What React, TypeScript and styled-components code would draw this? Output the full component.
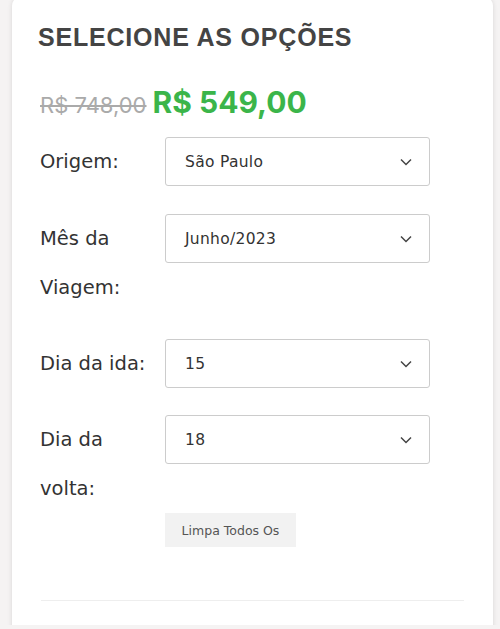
import React from "react";
import styled, { createGlobalStyle } from "styled-components";

const Global = createGlobalStyle`
  html, body { margin: 0; padding: 0; background: #f5f3f3; }
  body { font-family: "DejaVu Sans", "Liberation Sans", sans-serif; overflow: hidden; }
`;

const Page = styled.div`
  height: 629px;
  padding: 0 7px 0 12px;
`;

const Card = styled.div`
  margin-top: -4px;
  background: #fff;
  border-radius: 10px;
  box-shadow: 0 0 5px rgba(0, 0, 0, 0.12);
  padding: 26px 29px 40px 28px;
  min-height: 660px;
  box-sizing: border-box;
`;

const Title = styled.h2`
  margin: 0 0 0 -2px;
  font-family: "Liberation Sans", Arial, sans-serif;
  font-weight: 700;
  font-size: 25px;
  line-height: 30px;
  letter-spacing: 0.8px;
  color: #444;
`;

const PriceRow = styled.div`
  display: flex;
  align-items: baseline;
  gap: 6px;
  margin-top: 32px;
`;

const OldPrice = styled.span`
  font-family: "Inter", sans-serif;
  font-size: 22px;
  color: #aaa;
  text-decoration: line-through;
`;

const NewPrice = styled.span`
  font-family: "Inter", sans-serif;
  font-weight: 700;
  font-size: 30px;
  color: #3bb54a;
`;

const Form = styled.div`
  margin-top: 17px;
  display: grid;
  grid-template-columns: 125px 265px;
  grid-template-rows: auto;
  row-gap: 27px;
  & > :nth-child(3), & > :nth-child(4) {
    margin-top: 1px;
  }
`;

const Label = styled.div`
  font-family: "DejaVu Sans", sans-serif;
  font-size: 19.5px;
  line-height: 49px;
  color: #333;
  padding-right: 8px;
`;

const SelectBox = styled.div`
  height: 49px;
  box-sizing: border-box;
  border: 1px solid #ccc;
  border-radius: 3px;
  display: flex;
  align-items: center;
  justify-content: space-between;
  padding: 0 17px 0 19px;
  font-family: "DejaVu Sans", sans-serif;
  font-size: 15.5px;
  letter-spacing: 0.3px;
  color: #333;
`;

const Actions = styled.div`
  margin-left: 125px;
`;

const ClearButton = styled.button`
  border: 0;
  background: #f2f2f2;
  height: 34px;
  width: 131px;
  font-family: "DejaVu Sans", sans-serif;
  font-size: 12.5px;
  color: #555;
  padding: 0;
`;

const Divider = styled.hr`
  border: 0;
  border-top: 1px solid #eee;
  margin: 53px 0 0 1px;
`;

const Chevron = () => (
  <svg width="12" height="8" viewBox="0 0 12 8" fill="none">
    <path d="M1 1.5 L6 6.5 L11 1.5" stroke="#444" strokeWidth="1.5" />
  </svg>
);

const Field = ({ label, value }: { label: string; value: string }) => (
  <>
    <Label>{label}</Label>
    <SelectBox>
      <span>{value}</span>
      <Chevron />
    </SelectBox>
  </>
);

export default function App() {
  return (
    <Page>
      <Global />
      <Card>
        <Title>SELECIONE AS OPÇÕES</Title>
        <PriceRow>
          <OldPrice>R$ 748,00</OldPrice>
          <NewPrice>R$ 549,00</NewPrice>
        </PriceRow>
        <Form>
          <Field label="Origem:" value="São Paulo" />
          <Field label="Mês da Viagem:" value="Junho/2023" />
          <Field label="Dia da ida:" value="15" />
          <Field label="Dia da volta:" value="18" />
        </Form>
        <Actions>
          <ClearButton>Limpa Todos Os</ClearButton>
        </Actions>
        <Divider />
      </Card>
    </Page>
  );
}
